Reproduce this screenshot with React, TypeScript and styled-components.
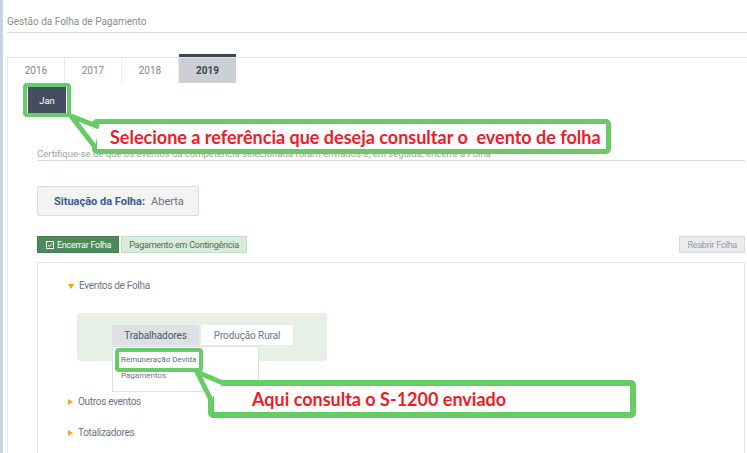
import React from 'react'
import styled, { createGlobalStyle, css } from 'styled-components'

const GlobalStyle = createGlobalStyle`
  body {
    margin: 0;
    background: #fff;
    font-family: Roboto, "Liberation Sans", Arial, sans-serif;
  }
`

const Shell = styled.div`
  position: relative;
  display: flex;
  width: 747px;
  height: 453px;
  overflow: hidden;
`

const SideStrip = styled.div`
  width: 3px;
  flex-shrink: 0;
  background: #c9d2e3;
`

const Main = styled.div`
  flex: 1;
  min-width: 0;
  display: flex;
  flex-direction: column;
  padding-left: 4px;
`

const PageTitle = styled.div`
  font-size: 10px;
  line-height: 14px;
  color: #85917f;
  padding: 15px 0 3px;
  border-bottom: 1px solid #d5dbe4;
`

const YearPanel = styled.div`
  flex: 1;
  display: flex;
  flex-direction: column;
  margin-top: 24px;
  border-top: 1px solid #e2e6eb;
  border-left: 1px solid #e2e6eb;
`

const YearTabs = styled.div`
  display: flex;
  height: 25px;
`

const YearTab = styled.div<{ $active?: boolean }>`
  position: relative;
  width: 57px;
  display: flex;
  align-items: center;
  justify-content: center;
  font-size: 10px;
  color: #80868e;
  border-right: 1px solid #e8ebee;
  box-sizing: border-box;
  ${({ $active }) =>
    $active &&
    css`
      background: #ccd0d4;
      color: #3b4250;
      font-weight: 700;
      border-right: none;
      &::before {
        content: '';
        position: absolute;
        left: 0;
        right: 0;
        top: -4px;
        height: 3px;
        background: #3e4655;
      }
    `}
`

const MonthRow = styled.div`
  display: flex;
  padding-left: 15px;
`

const Marker = styled.div<{ $pad?: string }>`
  display: inline-flex;
  border: 4px solid #66cc66;
  border-radius: 4px;
  padding: ${({ $pad }) => $pad || '0'};
`

const MonthButton = styled.div`
  width: 38px;
  height: 26px;
  display: flex;
  align-items: center;
  justify-content: center;
  background: #444d5f;
  color: #fff;
  font-size: 9.5px;
`

const Notice = styled.div`
  margin: 31px 2px 0 29px;
  font-size: 9.5px;
  line-height: 12px;
  color: #9aa39a;
  border-bottom: 1px solid #d5dbe4;
  white-space: nowrap;
`

const StatusBox = styled.div`
  margin: 25px 0 0 29px;
  width: 162px;
  height: 30px;
  box-sizing: border-box;
  display: flex;
  align-items: center;
  gap: 6px;
  padding-left: 16px;
  background: #f2f3f2;
  border: 1px solid #d3e3d3;
  border-radius: 2px;
  font-size: 11px;
`

const StatusLabel = styled.span`
  font-weight: 700;
  color: #3b5c8c;
`

const StatusValue = styled.span`
  color: #6c7480;
`

const ActionRow = styled.div`
  margin: 20px 2px 0 29px;
  display: flex;
  justify-content: space-between;
`

const ActionGroup = styled.div`
  display: flex;
  gap: 2px;
`

const variants = {
  primary: css`
    background: #4b8a5a;
    border-color: #437e51;
    color: #fff;
    padding-left: 8px;
  `,
  soft: css`
    background: #d8ecda;
    border-color: #c3dec6;
    color: #4f6b53;
  `,
  muted: css`
    background: #ececec;
    border-color: #d9d9d9;
    color: #8b9cb2;
  `,
}

const ActionButton = styled.div<{ $variant: keyof typeof variants }>`
  height: 17px;
  box-sizing: border-box;
  display: flex;
  align-items: center;
  gap: 3px;
  padding: 0 7px;
  border: 1px solid;
  font-size: 9px;
  letter-spacing: -0.25px;
  white-space: nowrap;
  ${({ $variant }) => variants[$variant]}
`

const EventsPanel = styled.div`
  flex: 1;
  margin: 9px 2px 0 29px;
  padding: 16px 0 0 28px;
  border: 1px solid #dfe5ef;
  border-bottom: none;
`

const SectionToggle = styled.div<{ $gap?: number }>`
  display: flex;
  align-items: center;
  gap: 5px;
  margin-top: ${({ $gap }) => $gap || 0}px;
  font-size: 10px;
  letter-spacing: -0.3px;
  line-height: 14px;
  color: #6a7684;
`

const Caret = styled.span<{ $open?: boolean }>`
  width: 0;
  height: 0;
  margin-left: 2px;
  ${({ $open }) =>
    $open
      ? css`
          border-left: 3px solid transparent;
          border-right: 3px solid transparent;
          border-top: 5px solid #f5a320;
        `
      : css`
          border-top: 3px solid transparent;
          border-bottom: 3px solid transparent;
          border-left: 5px solid #f5a320;
        `}
`

const WorkerArea = styled.div`
  margin: 20px 0 0 11px;
  width: 250px;
  height: 48px;
  box-sizing: border-box;
  padding: 12px 0 0 35px;
  background: #e6f0e7;
  border-radius: 3px;
`

const SubTabs = styled.div`
  position: relative;
  display: flex;
  gap: 2px;
`

const SubTab = styled.div<{ $active?: boolean; $w: number }>`
  width: ${({ $w }) => $w}px;
  height: 20px;
  display: flex;
  align-items: center;
  justify-content: center;
  font-size: 10px;
  letter-spacing: -0.1px;
  background: ${({ $active }) => ($active ? '#dde1e5' : '#fff')};
  color: ${({ $active }) => ($active ? '#4b5461' : '#707883')};
`

const Dropdown = styled.div`
  position: absolute;
  top: 21px;
  left: 0;
  width: 147px;
  height: 46px;
  box-sizing: border-box;
  display: flex;
  flex-direction: column;
  align-items: flex-start;
  padding: 1px 0 0 2px;
  background: #fff;
  border: 1px solid #dcdfe3;
`

const MenuItem = styled.div<{ $indent?: number }>`
  font-size: 8px;
  line-height: 12px;
  color: #6f7680;
  padding-left: ${({ $indent }) => $indent || 0}px;
  white-space: nowrap;
`

const MarkedItem = styled(MenuItem)`
  line-height: 16px;
  padding: 0 3px 0 2px;
  color: #666c75;
`

const CalloutBox = styled.div<{ $x: number; $y: number; $w: number; $h: number; $b: number; $pl: number; $fs: number }>`
  position: absolute;
  left: ${({ $x }) => $x}px;
  top: ${({ $y }) => $y}px;
  width: ${({ $w }) => $w}px;
  height: ${({ $h }) => $h}px;
  box-sizing: border-box;
  display: flex;
  align-items: center;
  padding-left: ${({ $pl }) => $pl}px;
  border: ${({ $b }) => $b}px solid #66cc66;
  border-radius: 5px;
  background: #fff;
  font-family: Lato, "Liberation Sans", Arial, sans-serif;
  font-weight: 700;
  font-size: ${({ $fs }) => $fs}px;
  color: #ee1c25;
  white-space: pre;
`

const TailLayer = styled.svg`
  position: absolute;
  left: 0;
  top: 0;
  pointer-events: none;
`

const CheckIcon = () => (
  <svg width="8" height="8" viewBox="0 0 8 8">
    <rect x="0.5" y="0.5" width="7" height="7" fill="none" stroke="#fff" strokeWidth="1" />
    <path d="M2 4 L3.5 5.5 L6 2.5" fill="none" stroke="#fff" strokeWidth="1" />
  </svg>
)

const App = () => {
  return (
    <>
      <GlobalStyle />
      <Shell>
        <SideStrip />
        <Main>
          <PageTitle>Gestão da Folha de Pagamento</PageTitle>
          <YearPanel>
            <YearTabs>
              {['2016', '2017', '2018', '2019'].map((y) => (
                <YearTab key={y} $active={y === '2019'}>
                  {y}
                </YearTab>
              ))}
            </YearTabs>
            <MonthRow>
              <Marker $pad="0 1px">
                <MonthButton>Jan</MonthButton>
              </Marker>
            </MonthRow>
            <Notice>
              Certifique-se de que os eventos da competência selecionada foram enviados e, em seguida, encerre a Folha
            </Notice>
            <StatusBox>
              <StatusLabel>Situação da Folha:</StatusLabel>
              <StatusValue>Aberta</StatusValue>
            </StatusBox>
            <ActionRow>
              <ActionGroup>
                <ActionButton $variant="primary">
                  <CheckIcon />
                  Encerrar Folha
                </ActionButton>
                <ActionButton $variant="soft">Pagamento em Contingência</ActionButton>
              </ActionGroup>
              <ActionButton $variant="muted">Reabrir Folha</ActionButton>
            </ActionRow>
            <EventsPanel>
              <SectionToggle>
                <Caret $open />
                Eventos de Folha
              </SectionToggle>
              <WorkerArea>
                <SubTabs>
                  <SubTab $active $w={87}>Trabalhadores</SubTab>
                  <SubTab $w={92}>Produção Rural</SubTab>
                  <Dropdown>
                    <Marker>
                      <MarkedItem>Remuneração Devida</MarkedItem>
                    </Marker>
                    <MenuItem $indent={6} style={{ marginTop: -2 }}>Pagamentos</MenuItem>
                  </Dropdown>
                </SubTabs>
              </WorkerArea>
              <SectionToggle $gap={34}>
                <Caret />
                Outros eventos
              </SectionToggle>
              <SectionToggle $gap={17}>
                <Caret />
                Totalizadores
              </SectionToggle>
            </EventsPanel>
          </YearPanel>
        </Main>

        <CalloutBox $x={92} $y={119} $w={519} $h={35} $b={5} $pl={13} $fs={18}>
          {'Selecione a referência que deseja consultar o  evento de folha'}
        </CalloutBox>
        <CalloutBox $x={208} $y={380} $w={428} $h={38} $b={6} $pl={38} $fs={18}>
          Aqui consulta o S-1200 enviado
        </CalloutBox>
        <TailLayer width="747" height="453">
          <path d="M99 127 L71 116 L95 147" fill="#fff" stroke="#66cc66" strokeWidth="5" strokeLinejoin="round" />
          <path d="M223 383 L197 372 L211 400" fill="#fff" stroke="#66cc66" strokeWidth="5" strokeLinejoin="round" />
        </TailLayer>
      </Shell>
    </>
  )
}

export default App
